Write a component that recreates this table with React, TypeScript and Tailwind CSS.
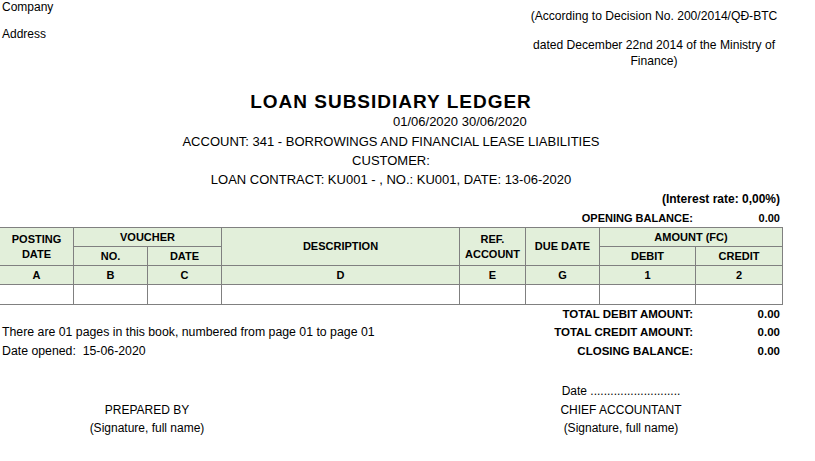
import React from "react";

const cell = "border-r border-b border-[#808080] flex items-center justify-center text-center";
const hd = "bg-[#e2efda] font-bold text-[11px] leading-[15px]";

export default function App() {
  const dots = ".".repeat(27);
  return (
    <div className="w-[815px] h-[461px] bg-white text-black text-[12px] font-['Liberation_Sans',Arial,sans-serif] overflow-hidden">
      {/* Top header */}
      <div className="flex justify-between h-[92px]">
        <div className="pl-[2px] leading-[14px]">
          <div>Company</div>
          <div className="mt-[13px]">Address</div>
        </div>
        <div className="w-[262px] mr-[30px] text-center leading-[16px] pt-[8px] text-[12.1px]">
          <div>(According to Decision No. 200/2014/QĐ-BTC</div>
          <div className="mt-[13px]">dated December 22nd 2014 of the Ministry of Finance)</div>
        </div>
      </div>

      {/* Title block */}
      <div className="w-[782px] text-center">
        <div className="font-bold text-[19px] leading-[20px] tracking-[1px]">LOAN SUBSIDIARY LEDGER</div>
        <div className="text-left pl-[393px] text-[13px] leading-[19px]">01/06/2020 30/06/2020</div>
        <div className="mt-[1px] text-[13px] leading-[19px]">ACCOUNT: 341 - BORROWINGS AND FINANCIAL LEASE LIABILITIES</div>
        <div className="text-[13px] leading-[19px]">CUSTOMER:</div>
        <div className="text-[13px] leading-[19px]">LOAN CONTRACT: KU001 - , NO.: KU001, DATE: 13-06-2020</div>
      </div>

      <div className="w-[780px] mt-[1px] text-right font-bold text-[12px] leading-[19px]">(Interest rate: 0,00%)</div>
      <div className="flex h-[18px] font-bold text-[11px] leading-[19px]">
        <div className="w-[500px]" />
        <div className="w-[193px] text-right">OPENING BALANCE:</div>
        <div className="w-[87px] text-right">0.00</div>
      </div>

      {/* Table */}
      <div className="w-[783px] grid grid-cols-[74px_74px_74px_238px_66px_74px_96px_87px] grid-rows-[19px_19px_19px_20px] border-t border-[#808080]">
        <div className={`${cell} ${hd} row-span-2 col-start-1 row-start-1`}>POSTING<br />DATE</div>
        <div className={`${cell} ${hd} col-span-2 col-start-2 row-start-1`}>VOUCHER</div>
        <div className={`${cell} ${hd} col-start-2 row-start-2`}>NO.</div>
        <div className={`${cell} ${hd} col-start-3 row-start-2`}>DATE</div>
        <div className={`${cell} ${hd} row-span-2 col-start-4 row-start-1`}>DESCRIPTION</div>
        <div className={`${cell} ${hd} row-span-2 col-start-5 row-start-1`}>REF.<br />ACCOUNT</div>
        <div className={`${cell} ${hd} row-span-2 col-start-6 row-start-1`}>DUE DATE</div>
        <div className={`${cell} ${hd} col-span-2 col-start-7 row-start-1`}>AMOUNT (FC)</div>
        <div className={`${cell} ${hd} col-start-7 row-start-2`}>DEBIT</div>
        <div className={`${cell} ${hd} col-start-8 row-start-2`}>CREDIT</div>
        {["A", "B", "C", "D", "E", "G", "1", "2"].map((l) => (
          <div key={l} className={`${cell} ${hd} row-start-3`}>{l}</div>
        ))}
        {Array.from({ length: 8 }).map((_, i) => (
          <div key={i} className={`${cell} bg-white row-start-4`} />
        ))}
      </div>

      {/* Totals */}
      <div className="w-[780px]">
        <div className="flex h-[18px] leading-[18px]">
          <div className="w-[500px]" />
          <div className="w-[193px] text-right font-bold text-[11.5px]">TOTAL DEBIT AMOUNT:</div>
          <div className="w-[87px] text-right font-bold text-[11.5px]">0.00</div>
        </div>
        <div className="flex h-[19px] leading-[19px]">
          <div className="w-[500px] pl-[2px] whitespace-nowrap text-[12.3px]">There are 01 pages in this book, numbered from page 01 to page 01</div>
          <div className="w-[193px] text-right font-bold text-[11.5px]">TOTAL CREDIT AMOUNT:</div>
          <div className="w-[87px] text-right font-bold text-[11.5px]">0.00</div>
        </div>
        <div className="flex h-[19px] leading-[19px]">
          <div className="w-[500px] pl-[2px] whitespace-pre text-[12.3px]">Date opened:  15-06-2020</div>
          <div className="w-[193px] text-right font-bold text-[11.5px]">CLOSING BALANCE:</div>
          <div className="w-[87px] text-right font-bold text-[11.5px]">0.00</div>
        </div>
      </div>

      {/* Signatures */}
      <div className="flex mt-[21px]">
        <div className="w-[294px] text-center">
          <div className="h-[19px]" />
          <div className="leading-[19px]">PREPARED BY</div>
          <div className="leading-[16px]">(Signature, full name)</div>
        </div>
        <div className="w-[227px]" />
        <div className="w-[200px] text-center">
          <div className="leading-[19px]">Date {dots}</div>
          <div className="leading-[19px]">CHIEF ACCOUNTANT</div>
          <div className="leading-[16px]">(Signature, full name)</div>
        </div>
      </div>
    </div>
  );
}
